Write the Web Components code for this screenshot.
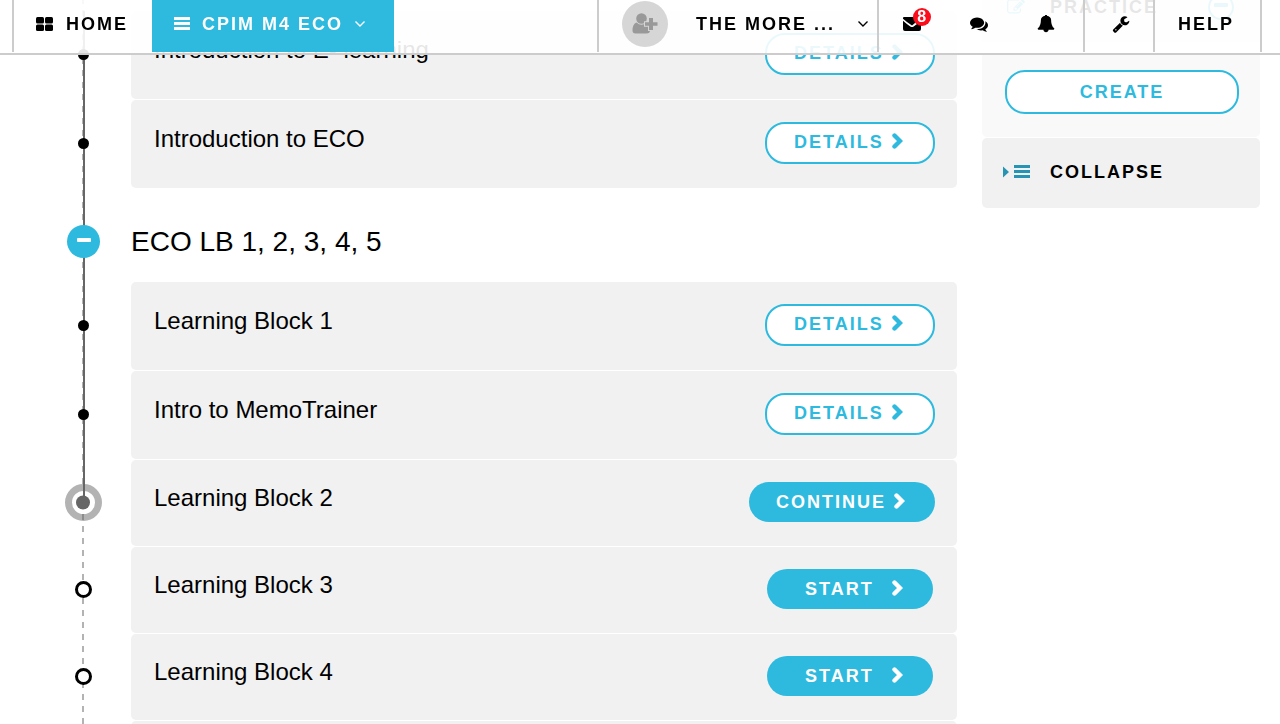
<!DOCTYPE html>
<html lang="en">
<head>
<meta charset="utf-8">
<title>CPIM M4 ECO</title>
<style>
  html { scrollbar-width: none; }
  body { margin: 0; font-family: "Liberation Sans", Arial, sans-serif; color: #000; background: #fff; }
</style>
</head>
<body>
<course-page>
  <app-header slot="header"></app-header>
  <course-outline>
    <course-step state="done" action="Details">Introduction to E- learning</course-step>
    <course-step state="done" action="Details">Introduction to ECO</course-step>
    <course-heading>ECO LB 1, 2, 3, 4, 5</course-heading>
    <course-step state="done" action="Details">Learning Block 1</course-step>
    <course-step state="done" action="Details">Intro to MemoTrainer</course-step>
    <course-step state="current" action="Continue">Learning Block 2</course-step>
    <course-step state="todo" action="Start">Learning Block 3</course-step>
    <course-step state="todo" action="Start">Learning Block 4</course-step>
    <course-step state="todo" action="Start">Learning Block 5</course-step>
  </course-outline>
  <practice-sidebar slot="side"></practice-sidebar>
</course-page>

<script>
const ICONS = {
  grid: ['0 0 17 14', '<rect width="8" height="6.5" rx="1.5"/><rect x="9" width="8" height="6.5" rx="1.5"/><rect y="7.5" width="8" height="6.5" rx="1.5"/><rect x="9" y="7.5" width="8" height="6.5" rx="1.5"/>'],
  bars: ['0 0 16 14', '<path d="M0 0h16v3H0zM0 5h16v3H0zM0 10h16v3H0z"/>'],
  down: ['0 0 10 6', '<path d="M.5.5 5 5 9.500 .5" fill="none" stroke="currentColor" stroke-width="1.4"/>'],
  minus: ['0 0 14 4', '<rect width="14" height="4" rx="1"/>'],
  ringminus: ['0 0 26 26', '<circle cx="13" cy="13" r="12" fill="#fff" stroke="currentColor" stroke-width="2"/><rect x="6" y="9" width="14" height="4" rx="1"/>'],
  indent: ['0 0 27 14', '<path d="M0 1.500 6 7 0 12.500zM11 0h16v3H11zM11 5h16v3H11zM11 10h16v3H11z"/>'],
  userplus: ['0 0 26 21', '<circle cx="9.500" cy="5.500" r="5.300"/><path d="M4.500 9.500Q9.500 14 14.500 9.500L18 13V17.500Q18 20.500 14.500 20.500H3.500Q.5 20.500.5 17.500Q.5 11 4.500 9.500z"/><path d="M17 5h4v4.300h4.500v3.400H21V17h-4v-4.300h-4V9.300h4z" stroke="#d6d6d6" stroke-width="2" paint-order="stroke"/>'],
  mail: ['0 0 18 14', '<path d="M1 0h16q1 0 1 1L9 8.500Q4 5.500 0 1.800V1q0-1 1-1z"/><path d="M0 3.800Q3 6.500 7.300 9.500 9 10.500 10.700 9.500L18 4v8q0 2-2 2H2q-2 0-2-2z"/>'],
  chevron: ['0 0 12 16', '<path d="M3.500 2.500 9 8l-5.500 5.500" fill="none" stroke="currentColor" stroke-width="4.400" stroke-linecap="round"/>'],
  bell: ['0 0 1792 1792', '<path d="M1728 1344q0 52-38 90t-90 38h-448q0 106-75 181t-181 75-181-75-75-181h-448q-52 0-90-38t-38-90q50-42 91-88t85-119.500 74.500-158.500 50-206 19.500-260q0-152 117-282.500t307-158.500q-8-19-8-39 0-40 28-68t68-28 68 28 28 68q0 20-8 39 190 28 307 158.500t117 282.500q0 139 19.500 260t50 206 74.500 158.500 85 119.500 91 88z"/>'],
  comments: ['0 0 1792 1792', '<path d="M1408 768q0 139-94 257t-256.500 186.500-353.500 68.500q-86 0-176-16-124 88-278 128-36 9-86 16h-3q-11 0-20.500-8t-11.500-21q-1-3-1-6.500t.5-6.500 2-6l2.500-5 3.500-5.500 4-5 4.500-5 4-4.500q5-6 23-25t26-29.500 22.500-29 25-38.500 20.500-44q-124-72-195-177t-71-224q0-139 94-257t256.500-186.500 353.500-68.500 353.500 68.500 256.500 186.500 94 257zm384 256q0 120-71 224.500t-195 176.500q10 24 20.500 44t25 38.500 22.500 29 26 29.500 23 25q1 1 4 4.500t4.500 5 4 5 3.500 5.500l2.500 5t2 6 .5 6.500-1 6.500q-3 14-13 22t-22 7q-50-7-86-16-154-40-278-128-90 16-176 16-271 0-472-132 58 4 88 4 161 0 309-45t264-129q125-92 192-212t67-254q0-77-23-152 129 71 204 178t75 230z"/>'],
  wrench: ['0 0 1792 1792', '<path d="M448 1472q0-26-19-45t-45-19-45 19-19 45 19 45 45 19 45-19 19-45zm644-420l-682 682q-37 37-90 37-52 0-91-37l-106-108q-38-36-38-90 0-53 38-91l681-681q39 98 114.500 173.500t173.500 114.500zm634-435q0 39-23 106-47 134-164.500 217.500t-258.500 83.500q-185 0-316.500-131.500t-131.500-316.500 131.500-316.500 316.500-131.500q58 0 121.500 16.500t107.500 46.500q16 11 16 28t-16 28l-293 169v224l193 107q5-3 79-48.500t135.500-81 70.500-35.500q15 0 23.500 10t8.500 25z"/>'],
  edit: ['0 0 1792 1792', '<path d="M888 1184l116-116-152-152-116 116v56h96v96h56zm440-720q-16-16-33 1l-350 350q-17 17-1 33t33-1l350-350q17-17 1-33zm80 594v190q0 119-84.500 203.500t-203.500 84.500h-832q-119 0-203.500-84.500t-84.500-203.500v-832q0-119 84.500-203.500t203.500-84.500h832q63 0 117 25 15 7 18 23 3 17-9 29l-49 49q-14 14-32 8-23-6-45-6h-832q-66 0-113 47t-47 113v832q0 66 47 113t113 47h832q66 0 113-47t47-113v-126q0-13 9-22l64-64q15-15 35-7t20 29zm-96-738l288 288-672 672h-288v-288zm444 132l-92 92-288-288 92-92q28-28 68-28t68 28l152 152q28 28 28 68t-28 68z"/>']
};

/* <ui-icon name size>: size is the drawn width in px. */
customElements.define('ui-icon', class extends HTMLElement {
  connectedCallback() {
    const [box, art] = ICONS[this.getAttribute('name')];
    const [, , w, h] = box.split(' ').map(Number);
    const width = Number(this.getAttribute('size') || w);
    this.attachShadow({ mode: 'open' }).innerHTML = `
      <style>:host{display:inline-flex;flex:none} svg{display:block;fill:currentColor}</style>
      <svg viewBox="${box}" width="${width}" height="${Math.round(width * h / w)}" aria-hidden="true">${art}</svg>`;
  }
});

class Component extends HTMLElement {
  connectedCallback() {
    if (!this.shadowRoot) this.attachShadow({ mode: 'open' }).innerHTML = this.render();
  }
}

customElements.define('course-page', class extends Component {
  render() {
    return `
      <style>
        :host { display: flow-root;
          --accent: #2dbade; --card: #f1f1f1; --line: #ccc; }
        .body { display: grid; grid-template-columns: minmax(0, 1fr) 278px; column-gap: 25px;
          align-items: start; padding-right: 20px; }
      </style>
      <slot name="header"></slot>
      <div class="body"><slot></slot><slot name="side"></slot></div>`;
  }
});

customElements.define('app-header', class extends Component {
  render() {
    return `
      <style>
        :host { display: block; position: fixed; top: 0; left: 0; right: 0; z-index: 10;
          background: rgba(255,255,255,.9); border-bottom: 2px solid var(--line); padding-bottom: 1px; }
        nav { display: flex; height: 52px; padding: 0 18px 0 12px; }
        a, button { display: flex; align-items: center; box-sizing: border-box; height: 52px;
          padding: 0; border: 0; background: none; color: #000; text-decoration: none;
          font: bold 18px/20px "Liberation Sans", Arial, sans-serif; letter-spacing: 2px;
          text-transform: uppercase; white-space: nowrap; cursor: pointer; padding-bottom: 5px; }
        .edge { border-left: 2px solid var(--line); }
        .home { width: 140px; padding-left: 22px; gap: 13px; }
        .course { width: 242px; padding-left: 22px; gap: 12px; background: var(--accent); color: #fff; }
        .user { margin-left: auto; width: 280px; padding: 0 9px 5px 23px; gap: 28px; }
        .user ui-icon[name=down] { margin-left: auto; }
        .user { gap: 0; }
        .avatar { display: grid; place-items: center; flex: none; width: 46px; height: 46px; margin-right: 28px;
          border-radius: 50%; background: #d6d6d6; color: #999; }
        .alerts { display: grid; grid-template-columns: repeat(3, 1fr); box-sizing: border-box;
          width: 206px; padding-right: 4px; }
        .alerts button, .tools { justify-content: center; }
        .alerts button { position: relative; }
        .badge { position: absolute; top: 8px; right: 15px; width: 18px; height: 18px;
          border-radius: 50%; background: #fc0d1b; color: #fff; font-size: 16px; line-height: 17px;
          letter-spacing: 0; text-align: center; }
        .tools { width: 70px; padding-left: 4px; }
        .help { width: 109px; padding-left: 23px; border-right: 2px solid var(--line); }
      </style>
      <nav aria-label="Main">
        <a class="home edge" href="#home"><ui-icon name="grid"></ui-icon>Home</a>
        <button class="course"><ui-icon name="bars"></ui-icon>CPIM M4 ECO<ui-icon name="down"></ui-icon></button>
        <button class="user edge"><span class="avatar"><ui-icon name="userplus"></ui-icon></span>The more ...<ui-icon name="down"></ui-icon></button>
        <div class="alerts edge">
          <button aria-label="Messages"><ui-icon name="mail"></ui-icon><span class="badge">8</span></button>
          <button aria-label="Discussions"><ui-icon name="comments" size="18"></ui-icon></button>
          <button aria-label="Notifications"><ui-icon name="bell" size="18"></ui-icon></button>
        </div>
        <button class="tools edge" aria-label="Tools"><ui-icon name="wrench" size="18"></ui-icon></button>
        <a class="help edge" href="#help">Help</a>
      </nav>`;
  }
});

/* <pill-button kind="outline|wide|solid|start" arrow> */
customElements.define('pill-button', class extends Component {
  render() {
    const arrow = this.hasAttribute('arrow') ? '<ui-icon name="chevron"></ui-icon>' : '';
    return `
      <style>
        :host { display: block; }
        button { display: flex; align-items: center; box-sizing: border-box; width: 100%; height: 40px;
          padding: 0 30px 0 27px; border: 0; border-radius: 20px; background: var(--accent); color: #fff;
          font: bold 18px/20px "Liberation Sans", Arial, sans-serif; letter-spacing: 2px;
          text-transform: uppercase; white-space: nowrap; cursor: pointer; }
        ui-icon { margin-left: auto; padding-bottom: 2px; }
        :host([kind=outline]) button { height: 42px; padding-bottom: 2px;
          border: 2px solid var(--accent); background: #fff; color: var(--accent); }
        :host([kind=start]) button { padding-left: 38px; }
        :host([kind=wide]) button { height: 44px; justify-content: center; padding: 0;
          border: 2px solid var(--accent); background: #fff; color: var(--accent); }
      </style>
      <button type="button"><slot></slot>${arrow}</button>`;
  }
});

customElements.define('course-outline', class extends Component {
  render() {
    return `
      <style>
        :host { display: block; padding-top: 11px;
          background: linear-gradient(#b3b3b3 6px, transparent 6px) 82px 10px / 2px 12px repeat-y; }
      </style>
      <slot></slot>`;
  }
});

const MARKERS = {
  done: '<svg width="11" height="11"><circle cx="5.500" cy="5.500" r="5.500"/></svg>',
  current: '<svg width="37" height="37"><circle cx="18.500" cy="18.500" r="15" fill="#fff" stroke="#b3b3b3" stroke-width="7"/><path d="M18 0h2v18h-2z" fill="#666"/><path d="M17 30h2v6h-2z" fill="#8c8c8c"/><circle cx="18" cy="18.500" r="7" fill="#666"/></svg>',
  todo: '<svg width="17" height="17"><circle cx="8.500" cy="8.500" r="7" fill="#fff" stroke="#000" stroke-width="3"/></svg>'
};

customElements.define('course-step', class extends Component {
  render() {
    const state = this.getAttribute('state');
    const action = this.getAttribute('action');
    const kind = { Details: 'outline', Continue: 'solid', Start: 'start' }[action];
    return `
      <style>
        :host { display: grid; grid-template-columns: 131px minmax(0, 1fr); }
        .rail { display: grid; align-items: center; justify-items: center; padding: 22px 0 25px 36px; }
        .rail svg { display: block; }
        :host([state=done]) .rail { background: linear-gradient(#666, #666) 83px 0 / 2px 100% no-repeat; }
        :host([state=current]) .rail { background: linear-gradient(#666, #666) 83px 0 / 2px 28px no-repeat; }
        .card { display: flex; align-items: center; justify-content: space-between;
          padding: 22px 22px 24px 23px; margin-bottom: 1px; border-radius: 5px; background: var(--card); }
        h3 { margin: 0; padding-bottom: 8px; font-size: 24px; line-height: 28px; font-weight: normal; }
        pill-button { width: 170px; }
        pill-button[kind=solid] { width: 186px; }
        pill-button[kind=start] { width: 166px; margin-right: 2px; }
      </style>
      <div class="rail">${MARKERS[state]}</div>
      <div class="card"><h3><slot></slot></h3><pill-button kind="${kind}" arrow>${action}</pill-button></div>`;
  }
});

customElements.define('course-heading', class extends Component {
  render() {
    return `
      <style>
        :host { display: grid; grid-template-columns: 131px minmax(0, 1fr); align-items: center; height: 93px; }
        .rail { display: grid; place-items: center; box-sizing: border-box; height: 100%; padding: 11px 0 0 36px;
          background: linear-gradient(#666, #666) 83px 0 / 2px 100% no-repeat; }
        button { display: grid; place-items: center; width: 33px; height: 33px; padding: 0 0 2px;
          box-sizing: border-box; border: 0; border-radius: 50%; background: var(--accent); color: #fff; }
        h2 { margin: 0; padding-top: 12px; font-size: 28px; line-height: 32px; font-weight: normal; }
      </style>
      <div class="rail"><button type="button" aria-label="Collapse section"><ui-icon name="minus"></ui-icon></button></div>
      <h2><slot></slot></h2>`;
  }
});

customElements.define('practice-sidebar', class extends Component {
  render() {
    return `
      <style>
        /* The first bar is tucked under the top edge of the window. */
        :host { display: block; margin-top: -28px; }
        .bar { display: flex; align-items: center; box-sizing: border-box; width: 100%; height: 70px;
          padding: 0 26px 2px 21px; border: 0; border-radius: 5px; background: var(--card); color: #000;
          font: bold 18px/20px "Liberation Sans", Arial, sans-serif; letter-spacing: 2px;
          text-transform: uppercase; cursor: pointer; }
        .bar ui-icon { color: #2794b4; }
        .mark { display: flex; width: 47px; }
        .practice { border-radius: 5px 5px 0 0; padding-bottom: 0; }
        .practice .mark { box-sizing: border-box; padding-left: 4px; }
        .practice ui-icon { color: var(--accent); }
        .practice > ui-icon { margin-left: auto; }
        .content { padding: 28px 21px 23px 23px; margin-bottom: 1px; border-radius: 0 0 5px 5px; background: #f9f9f9; }
      </style>
      <button class="bar practice" type="button"><span class="mark"><ui-icon name="edit" size="18"></ui-icon></span>Practice<ui-icon name="ringminus"></ui-icon></button>
      <div class="content"><pill-button kind="wide">Create</pill-button></div>
      <button class="bar" type="button"><span class="mark"><ui-icon name="indent"></ui-icon></span>Collapse</button>`;
  }
});
</script>
</body>
</html>
